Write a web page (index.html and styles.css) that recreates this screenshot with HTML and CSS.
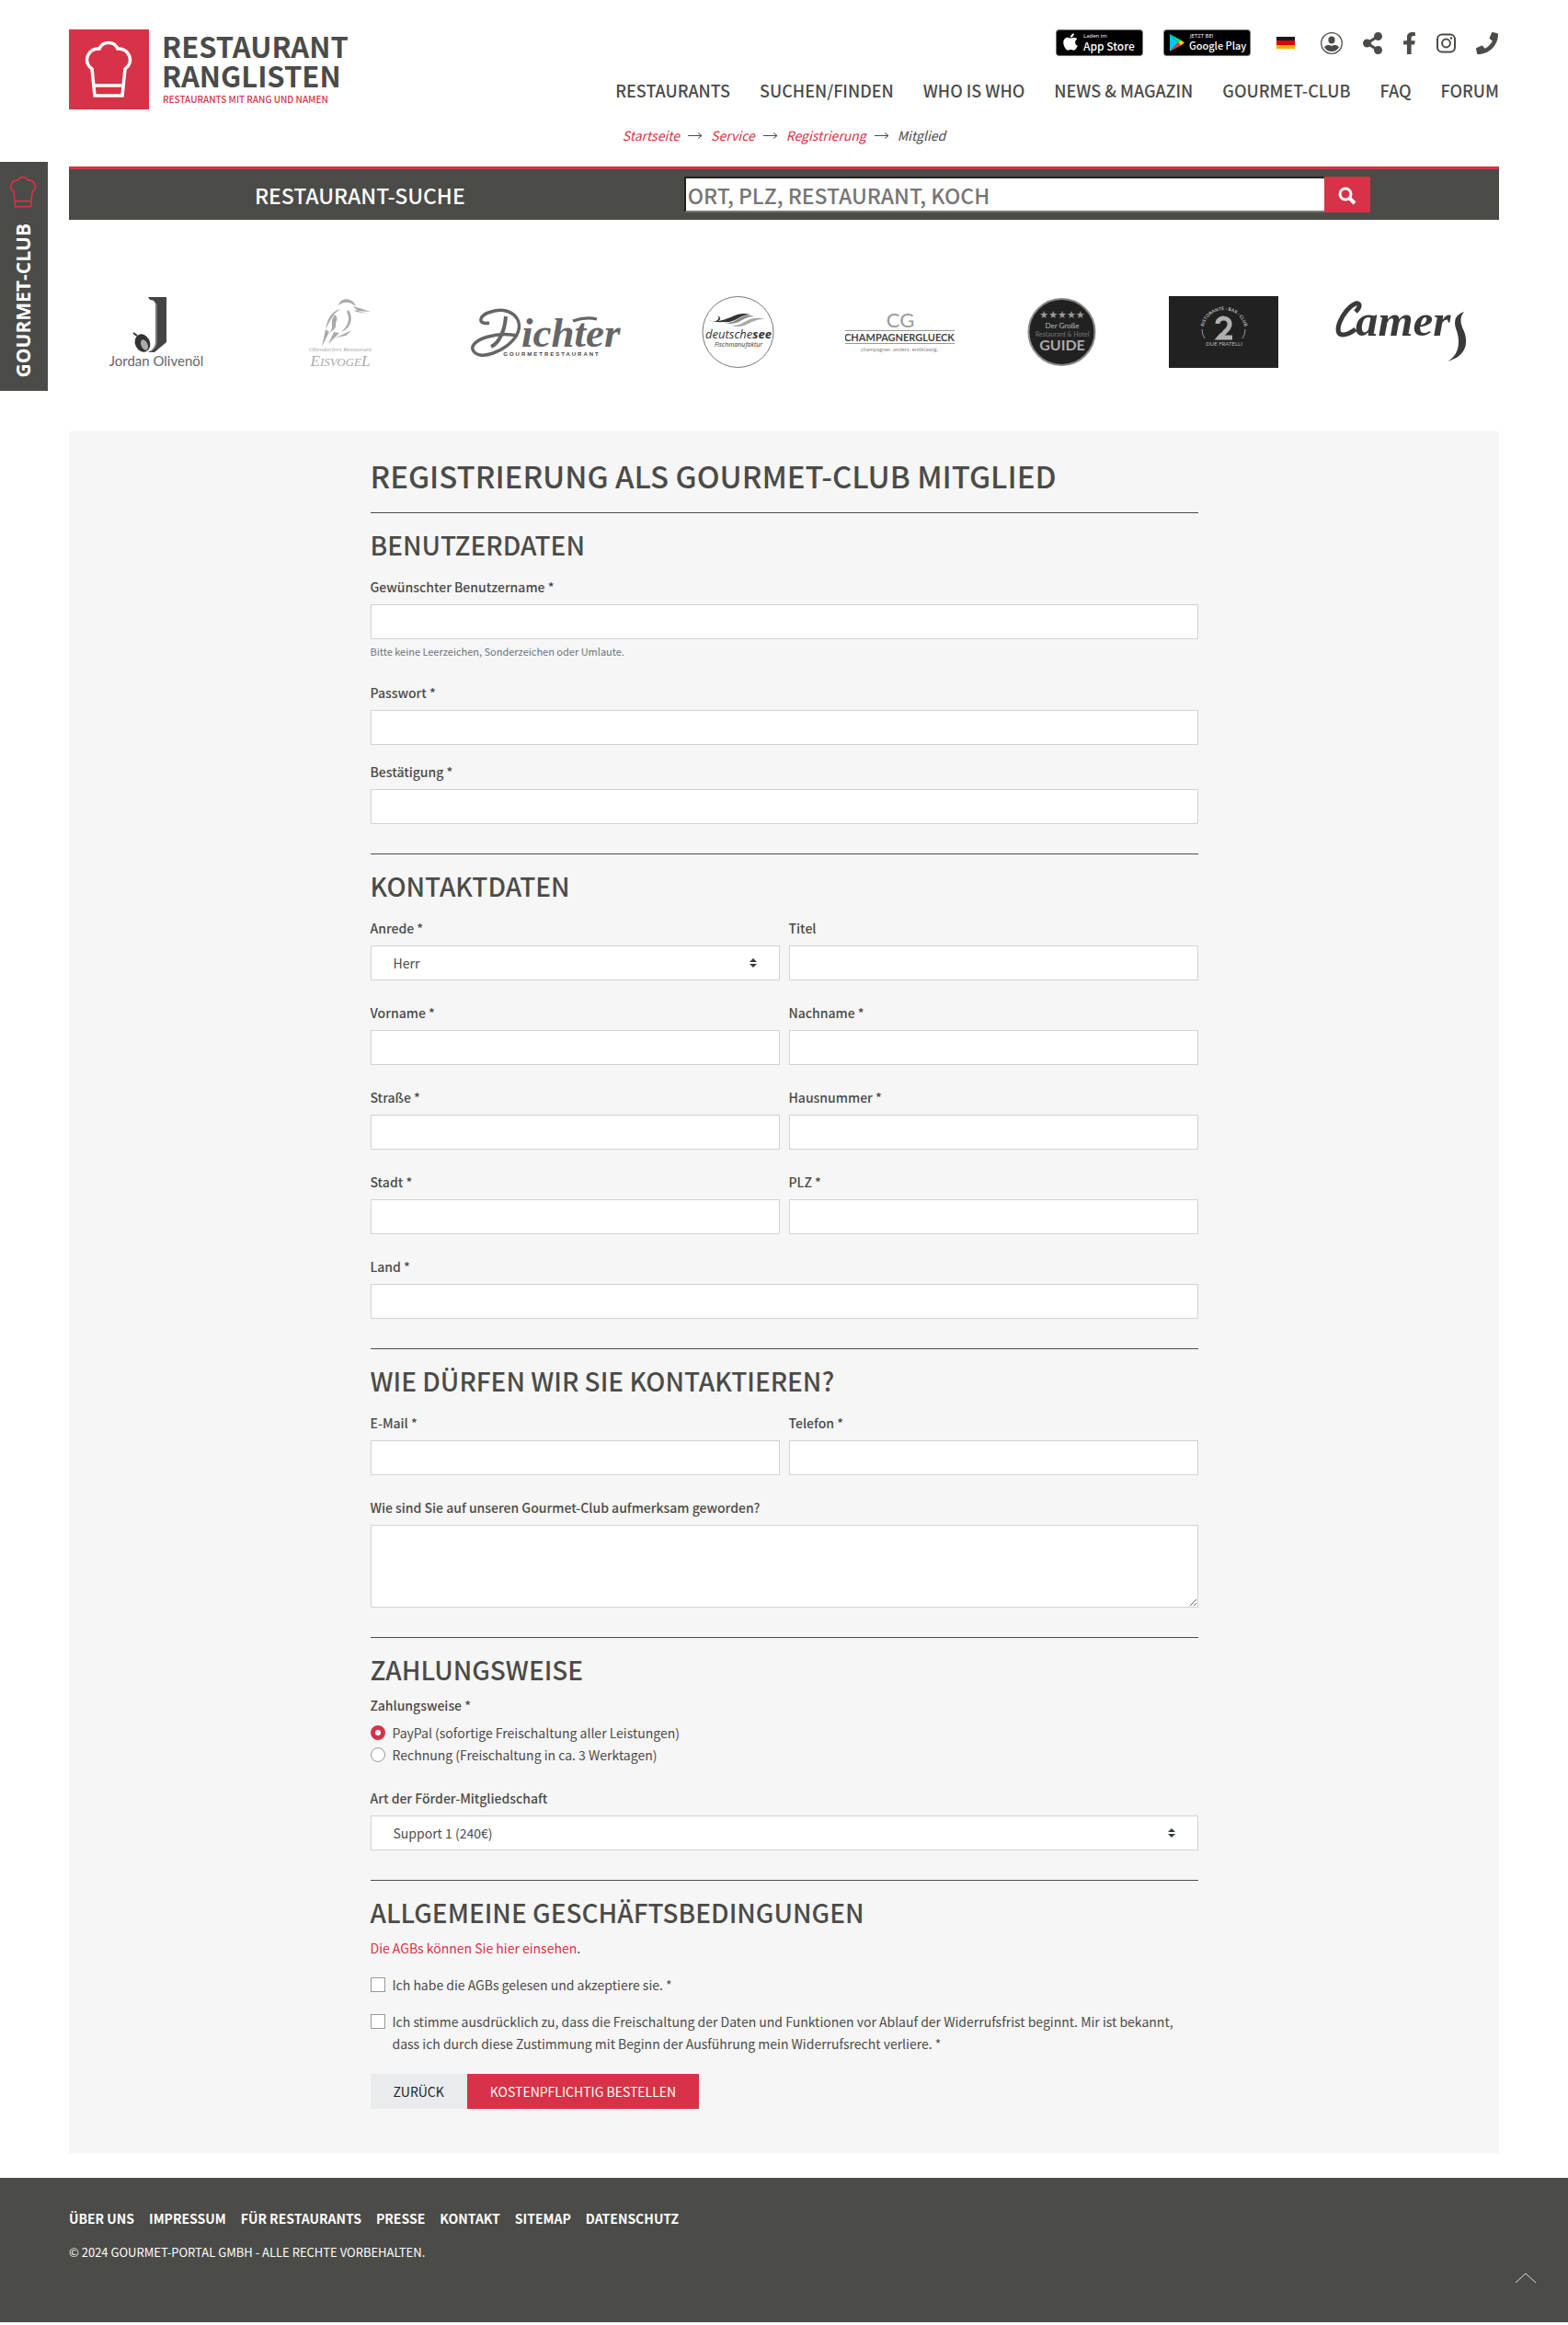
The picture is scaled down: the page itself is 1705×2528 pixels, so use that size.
FILE: index.html
```html
<!DOCTYPE html>
<html lang="de">
<head>
    <meta charset="UTF-8">
    <meta name="viewport" content="width=device-width, initial-scale=1.0">
    <title>Registrierung als Gourmet-Club Mitglied</title>
    <link rel="stylesheet" href="styles.css">
</head>
<body>
    <a class="club-tab" href="#">
        <svg class="club-hat" viewBox="13 10 60 66" aria-hidden="true">
            <path d="M28 72L25 43A12 12 0 0 1 33 21A11 11 0 0 1 53 21A12 12 0 0 1 61 43L58 72ZM27 61H59"/>
        </svg>
        <span>GOURMET-CLUB</span>
    </a>

    <div class="page">
        <header class="header">
            <a class="logo" href="#" aria-label="Restaurant Ranglisten">
                <svg width="320" height="87" viewBox="0 0 320 87">
                    <rect width="87" height="87" fill="#d73247"/>
                    <path d="M28 72L25 43A12 12 0 0 1 33 21A11 11 0 0 1 53 21A12 12 0 0 1 61 43L58 72ZM27 61H59" fill="none" stroke="#fff" stroke-width="3.5"/>
                    <text class="logo-name" x="101" y="31">RESTAURANT</text>
                    <text class="logo-name" x="101" y="63">RANGLISTEN</text>
                    <text class="logo-claim" x="102" y="80">RESTAURANTS MIT RANG UND NAMEN</text>
                </svg>
            </a>
            <div class="header-right">
                <div class="tools">
                    <a href="#" class="badge" aria-label="Laden im App Store">
                        <svg width="95" height="29" viewBox="0 0 95 29">
                            <rect x="0.5" y="0.5" width="94" height="28" rx="3" fill="#000" stroke="#777"/>
                            <svg x="8" y="3" width="16" height="21" viewBox="0 0 384 512"><path fill="#fff" d="M318.7 268.7c-.2-36.7 16.4-64.4 50-84.8-18.8-26.9-47.2-41.7-84.7-44.6-35.5-2.8-74.3 20.7-88.5 20.7-15 0-49.4-19.7-76.4-19.7C63.3 141.2 4 184.8 4 273.5q0 39.3 14.4 81.2c12.8 36.7 59 126.7 107.2 125.2 25.2-.6 43-17.9 75.8-17.9 31.8 0 48.3 17.9 76.4 17.9 48.6-.7 90.4-82.5 102.6-119.3-65.2-30.7-61.7-90-61.7-91.9zm-56.6-164.2c27.3-32.4 24.8-61.9 24-72.5-24.1 1.4-52 16.4-67.9 34.9-17.5 19.8-27.8 44.3-25.6 71.9 26.1 2 49.9-11.4 69.5-34.3z"/></svg>
                            <text class="badge-small" x="30" y="9">Laden im</text>
                            <text class="badge-apple" x="30" y="23">App Store</text>
                        </svg>
                    </a>
                    <a href="#" class="badge" aria-label="Jetzt bei Google Play">
                        <svg width="95" height="29" viewBox="0 0 95 29">
                            <rect x="0.5" y="0.5" width="94" height="28" rx="3" fill="#000" stroke="#777"/>
                            <path fill="#00c3ff" d="M7 5V24L16 14.5Z"/>
                            <path fill="#00e08a" d="M7 5L19 11.5L16 14.5Z"/>
                            <path fill="#ffce00" d="M19 11.5L23 14.5L19 17.5L16 14.5Z"/>
                            <path fill="#f0384b" d="M7 24L19 17.5L16 14.5Z"/>
                            <text class="badge-small" x="29" y="9">JETZT BEI</text>
                            <text class="badge-google" x="28" y="22">Google Play</text>
                        </svg>
                    </a>
                    <a href="#" class="flag" aria-label="Deutsch"></a>
                    <a href="#" aria-label="Anmelden">
                        <svg width="24" height="24" viewBox="0 0 24 24">
                            <circle cx="12" cy="12" r="11.3" fill="none" stroke="#4b4b48" stroke-width="1.3"/>
                            <ellipse cx="12" cy="8.5" rx="3.6" ry="4" fill="#4b4b48"/>
                            <path fill="#4b4b48" d="M4 16.5C5 14.5 7 14 9 14Q12 15.500 15 14C17 14 19 14.5 20 16.5C18 19.5 15 21 12 21S6 19.5 4 16.5Z"/>
                        </svg>
                    </a>
                    <a href="#" aria-label="Teilen">
                        <svg width="21" height="24" viewBox="0 0 448 512"><path fill="#4b4b48" d="M352 320c-22.608 0-43.387 7.819-59.79 20.895l-102.486-64.054a96.551 96.551 0 0 0 0-41.683l102.486-64.054C308.613 184.181 329.392 192 352 192c53.019 0 96-42.981 96-96S405.019 0 352 0s-96 42.981-96 96c0 7.158.79 14.13 2.276 20.841L155.79 180.895C139.387 167.819 118.608 160 96 160c-53.019 0-96 42.981-96 96s42.981 96 96 96c22.608 0 43.387-7.819 59.79-20.895l102.486 64.054A96.301 96.301 0 0 0 256 416c0 53.019 42.981 96 96 96s96-42.981 96-96-42.981-96-96-96z"/></svg>
                    </a>
                    <a href="#" aria-label="Facebook">
                        <svg width="15" height="24" viewBox="0 0 320 512"><path fill="#4b4b48" d="M279.14 288l14.22-92.66h-88.91v-60.13c0-25.35 12.42-50.06 52.24-50.06h40.42V6.26S260.43 0 225.36 0c-73.22 0-121.08 44.38-121.08 124.72v70.62H22.89V288h81.39v224h100.17V288z"/></svg>
                    </a>
                    <a href="#" aria-label="Instagram">
                        <svg width="21" height="24" viewBox="0 0 21 24">
                            <rect x="1" y="2.5" width="19" height="19" rx="5" fill="none" stroke="#4b4b48" stroke-width="2"/>
                            <circle cx="10.5" cy="12" r="4.4" fill="none" stroke="#4b4b48" stroke-width="2"/>
                            <circle cx="16" cy="6.5" r="1.3" fill="#4b4b48"/>
                        </svg>
                    </a>
                    <a href="#" aria-label="Telefon">
                        <svg width="24" height="24" viewBox="0 0 512 512"><path fill="#4b4b48" d="M493.4 24.6l-104-24c-11.3-2.6-22.9 3.3-27.5 13.9l-48 112c-4.2 9.8-1.4 21.3 6.9 28l60.6 49.6c-36 76.7-98.9 140.5-177.2 177.2l-49.6-60.6c-6.8-8.3-18.2-11.1-28-6.9l-112 48C3.9 366.5-2 378.1.6 389.4l24 104C27.1 504.2 36.7 512 48 512c256.1 0 464-207.5 464-464 0-11.2-7.7-20.9-18.6-23.4z"/></svg>
                    </a>
                </div>
                <nav class="main-nav">
                    <a href="#">Restaurants</a>
                    <a href="#">Suchen/Finden</a>
                    <a href="#">Who is Who</a>
                    <a href="#">News &amp; Magazin</a>
                    <a href="#">Gourmet-Club</a>
                    <a href="#">FAQ</a>
                    <a href="#">Forum</a>
                </nav>
            </div>
        </header>

        <nav class="breadcrumb">
            <a href="#">Startseite</a>
            <svg class="arrow" viewBox="0 0 16 10"><path d="M0 5.5H15M11 2.5L15 5.5L11 8.5"/></svg>
            <a href="#">Service</a>
            <svg class="arrow" viewBox="0 0 16 10"><path d="M0 5.5H15M11 2.5L15 5.5L11 8.5"/></svg>
            <a href="#">Registrierung</a>
            <svg class="arrow" viewBox="0 0 16 10"><path d="M0 5.5H15M11 2.5L15 5.5L11 8.5"/></svg>
            <span>Mitglied</span>
        </nav>

        <form class="search">
            <label class="search-title" for="search">Restaurant-Suche</label>
            <div class="search-box">
                <input type="text" id="search" placeholder="ORT, PLZ, RESTAURANT, KOCH">
                <button type="submit" aria-label="Suchen">
                    <svg width="20" height="20" viewBox="0 0 20 20"><circle cx="8" cy="8" r="6" fill="none" stroke="#fff" stroke-width="3"/><path d="M12 12L18 18" stroke="#fff" stroke-width="4"/></svg>
                </button>
            </div>
        </form>

        <section class="partners">
            <svg width="133" height="78" viewBox="0 0 133 78">
                <path fill="#444" d="M58 1H78V50L65 61H58Q66 57 66 50V8Q65 4 60 4Z"/>
                <path d="M67 8V51Q66 57 61 60" fill="none" stroke="#aaa"/>
                <ellipse cx="52" cy="51" rx="8" ry="10" transform="rotate(-25 52 51)" fill="#333"/>
                <ellipse cx="54" cy="53" rx="3.5" ry="6" transform="rotate(-25 54 53)" fill="#aaa"/>
                <path d="M46 43L42 40" stroke="#333" stroke-width="2"/>
                <text class="p-jordan" x="67" y="76">Jordan Olivenöl</text>
            </svg>
            <svg width="151" height="78" viewBox="0 0 151 78">
                <path fill="#aaa" d="M75 10C78 0 91 2 94 11Q84 3 75 10ZM91 11Q99 13 110 17L96 16ZM92 15L107 19L94 17Z"/>
                <path fill="#aaa" d="M86 15C92 25 88 35 78 39C86 32 88 24 84 17ZM78 14C66 16 63 26 61 36C66 27 69 18 78 14ZM71 20C76 25 72 26 72 31C73 36 67 38 65 40C72 32 64 30 71 20ZM61 36L57 55L65 39ZM70 39L64 52L76 40ZM72 45L90 37L83 43Z"/>
                <text class="p-eis-small" x="77" y="60">Obendorfers Restaurant</text>
                <text class="p-eis" x="77" y="76">E<tspan class="p-eis-caps">ISVOGE</tspan>L</text>
            </svg>
            <svg width="185" height="78" viewBox="0 0 185 78">
                <path d="M31 29C19 32 18 21 33 17C52 10 70 24 61 42C51 60 18 72 13 58C10 47 40 38 62 43" fill="none" stroke="#666" stroke-width="3.5"/>
                <path d="M49 22C48 37 42 51 33 55" fill="none" stroke="#666" stroke-width="4"/>
                <text class="p-dichter" x="66" y="55">ichter</text>
                <path d="M122 27Q136 22 148 25" fill="none" stroke="#666" stroke-width="3"/>
                <text class="p-dichter-small" x="99" y="65">GOURMETRESTAURANT</text>
            </svg>
            <svg width="119" height="78" viewBox="0 0 119 78">
                <circle cx="59.5" cy="39" r="38.5" fill="#fff" stroke="#777"/>
                <path fill="#333" d="M27 26Q34 29 37 26Q40 24 37 21Q43 24 38 27C51 26 58 16 73 20C61 20 56 30 43 28Q34 29 27 26Z"/>
                <path fill="#888" d="M46 29C59 30 64 17 77 22C64 22 60 33 46 29Z"/>
                <path fill="#aaa" d="M53 32C67 33 69 20 89 25C74 24 67 37 53 32Z"/>
                <text class="p-see" x="60" y="46">deutsche<tspan class="p-see-bold">see</tspan></text>
                <text class="p-see-small" x="60" y="55">Fischmanufaktur</text>
            </svg>
            <svg width="119" height="78" viewBox="0 0 119 78">
                <text class="p-cg" x="60" y="34">CG</text>
                <path d="M0 37.5H119M0 51.5H119" stroke="#999"/>
                <text class="p-glueck" x="59" y="49">CHAMPAGNERGLUECK</text>
                <text class="p-glueck-small" x="59" y="60">champagner. anders. erstklassig.</text>
            </svg>
            <svg width="119" height="78" viewBox="0 0 119 78">
                <circle cx="59.5" cy="39" r="36" fill="#212121" stroke="#888" stroke-width="2"/>
                <text class="p-stars" x="60" y="24">★★★★★</text>
                <text class="p-guide-top" x="60" y="35">Der Große</text>
                <text class="p-guide-mid" x="60" y="44">Restaurant &amp; Hotel</text>
                <text class="p-guide" x="60" y="59">GUIDE</text>
            </svg>
            <svg width="119" height="78" viewBox="0 0 119 78">
                <rect width="119" height="78" fill="#212121"/>
                <path id="arc" d="M38 33A22.5 22.5 0 0 1 82 33" fill="none"/>
                <text class="p-arc"><textPath href="#arc" startOffset="50%">RISTORANTE · BAR · CLUB</textPath></text>
                <path d="M36 36Q36 42 39 46M83 36Q83 42 80 46" fill="none" stroke="#999"/>
                <path d="M53 30C53 22 67 22 66 31C66 36 61 38 55 45H69" fill="none" stroke="#b0b0b0" stroke-width="5"/>
                <path d="M61 30L57 40" stroke="#212121"/>
                <text class="p-due" x="60" y="54">DUE FRATELLI</text>
            </svg>
            <svg width="155" height="78" viewBox="0 0 155 78">
                <path d="M27 17C33 11 32 7 27 8C13 14 1 42 13 42C19 42 23 39 27 36" fill="none" stroke="#3a3a3a" stroke-width="5"/>
                <text class="p-camers" x="27" y="43">amer</text>
                <path fill="#3a3a3a" d="M145 17Q132 21 136 35C143 53 137 66 127 71C152 64 149 45 143 34Q139 24 145 17Z"/>
            </svg>
        </section>

        <main class="panel">
            <form class="form">
                <h1>Registrierung als Gourmet-Club Mitglied</h1>
                <hr>
                <h2>Benutzerdaten</h2>
                <div class="group">
                    <label for="username">Gewünschter Benutzername *</label>
                    <input type="text" id="username">
                    <small>Bitte keine Leerzeichen, Sonderzeichen oder Umlaute.</small>
                </div>
                <div class="group group-tight">
                    <label for="password">Passwort *</label>
                    <input type="password" id="password">
                </div>
                <div class="group">
                    <label for="confirm">Bestätigung *</label>
                    <input type="password" id="confirm">
                </div>
                <hr>
                <h2>Kontaktdaten</h2>
                <div class="row">
                    <div class="group">
                        <label for="anrede">Anrede *</label>
                        <select id="anrede">
                            <option>Herr</option>
                            <option>Frau</option>
                        </select>
                    </div>
                    <div class="group">
                        <label for="titel">Titel</label>
                        <input type="text" id="titel">
                    </div>
                    <div class="group">
                        <label for="vorname">Vorname *</label>
                        <input type="text" id="vorname">
                    </div>
                    <div class="group">
                        <label for="nachname">Nachname *</label>
                        <input type="text" id="nachname">
                    </div>
                    <div class="group">
                        <label for="strasse">Straße *</label>
                        <input type="text" id="strasse">
                    </div>
                    <div class="group">
                        <label for="hausnummer">Hausnummer *</label>
                        <input type="text" id="hausnummer">
                    </div>
                    <div class="group">
                        <label for="stadt">Stadt *</label>
                        <input type="text" id="stadt">
                    </div>
                    <div class="group">
                        <label for="plz">PLZ *</label>
                        <input type="text" id="plz">
                    </div>
                </div>
                <div class="group">
                    <label for="land">Land *</label>
                    <input type="text" id="land">
                </div>
                <hr>
                <h2>Wie dürfen wir Sie kontaktieren?</h2>
                <div class="row">
                    <div class="group">
                        <label for="email">E-Mail *</label>
                        <input type="email" id="email">
                    </div>
                    <div class="group">
                        <label for="telefon">Telefon *</label>
                        <input type="tel" id="telefon">
                    </div>
                </div>
                <div class="group">
                    <label for="info">Wie sind Sie auf unseren Gourmet-Club aufmerksam geworden?</label>
                    <textarea id="info"></textarea>
                </div>
                <hr>
                <h2>Zahlungsweise</h2>
                <fieldset class="payment">
                    <legend>Zahlungsweise *</legend>
                    <div class="check">
                        <input type="radio" name="payment" id="paypal" checked>
                        <label for="paypal">PayPal (sofortige Freischaltung aller Leistungen)</label>
                    </div>
                    <div class="check">
                        <input type="radio" name="payment" id="rechnung">
                        <label for="rechnung">Rechnung (Freischaltung in ca. 3 Werktagen)</label>
                    </div>
                </fieldset>
                <div class="group">
                    <label for="support">Art der Förder-Mitgliedschaft</label>
                    <select id="support">
                        <option>Support 1 (240€)</option>
                    </select>
                </div>
                <hr>
                <h2>Allgemeine Geschäftsbedingungen</h2>
                <p><a href="#">Die AGBs können Sie hier einsehen</a>.</p>
                <div class="check check-terms">
                    <input type="checkbox" id="agb">
                    <label for="agb">Ich habe die AGBs gelesen und akzeptiere sie. *</label>
                </div>
                <div class="check check-terms">
                    <input type="checkbox" id="widerruf">
                    <label for="widerruf">Ich stimme ausdrücklich zu, dass die Freischaltung der Daten und Funktionen vor Ablauf der Widerrufsfrist beginnt. Mir ist bekannt, dass ich durch diese Zustimmung mit Beginn der Ausführung mein Widerrufsrecht verliere. *</label>
                </div>
                <div class="buttons">
                    <button type="button" class="btn btn-light">Zurück</button>
                    <button type="submit" class="btn btn-primary">Kostenpflichtig bestellen</button>
                </div>
            </form>
        </main>
    </div>

    <footer class="footer">
        <div>
            <nav class="footer-nav">
                <a href="#">Über uns</a>
                <a href="#">Impressum</a>
                <a href="#">Für Restaurants</a>
                <a href="#">Presse</a>
                <a href="#">Kontakt</a>
                <a href="#">Sitemap</a>
                <a href="#">Datenschutz</a>
            </nav>
            <p class="copyright">© 2024 Gourmet-Portal GmbH - Alle Rechte vorbehalten.</p>
        </div>
        <a class="to-top" href="#" aria-label="Nach oben">
            <svg width="22" height="12" viewBox="0 0 22 12"><path d="M0 11L11 1L22 11" fill="none" stroke="#ddd"/></svg>
        </a>
    </footer>
</body>
</html>
```

FILE: styles.css
```css
* {
    box-sizing: border-box;
}

body {
    margin: 0;
    font-family: "Noto Sans CJK SC", "Noto Sans", sans-serif;
    font-size: 14px;
    line-height: 24px;
    color: #4b4b48;
    background: #fff;
}

a {
    color: #d73247;
    text-decoration: none;
}

svg {
    display: block;
    flex: none;
}

input,
select,
textarea,
button {
    font: inherit;
    color: inherit;
    margin: 0;
    border-radius: 0;
}

.page {
    padding: 0 75px;
}

/* Gourmet-Club Reiter am linken Rand */
.club-tab {
    position: absolute;
    left: 0;
    top: 176px;
    width: 52px;
    height: 249px;
    padding: 14px 2px 0 0;
    background: #4b4b48;
    color: #fff;
    display: flex;
    flex-direction: column;
    align-items: center;
    gap: 16px;
}

.club-hat {
    width: 34px;
    height: 37px;
    fill: none;
    stroke: #d73247;
    stroke-width: 3;
}

.club-tab span {
    writing-mode: vertical-rl;
    transform: rotate(180deg);
    font-family: "Open Sans", sans-serif;
    font-size: 21px;
    font-weight: 700;
}

/* Kopfbereich */
.header {
    display: flex;
    justify-content: space-between;
    padding-top: 32px;
}

.logo-name {
    font-size: 31px;
    font-weight: 700;
    fill: #4b4b48;
}

.logo-claim {
    font-size: 10px;
    font-weight: 500;
    fill: #d73247;
}

.header-right {
    display: flex;
    flex-direction: column;
    align-items: flex-end;
    gap: 25px;
}

.tools {
    display: flex;
    align-items: center;
    gap: 22px;
    height: 29px;
    padding-right: 1px;
}

.badge:nth-child(2) {
    margin-right: 6px;
}

.badge-small {
    font-family: "Open Sans", sans-serif;
    font-size: 6px;
    fill: #fff;
}

.badge-apple,
.badge-google {
    font-size: 12px;
    font-weight: 500;
    fill: #fff;
}

.badge-google {
    font-size: 11px;
}

.flag {
    width: 20px;
    height: 13px;
    margin-right: 6px;
    background: linear-gradient(#181820 33%, #d00 33%, #d00 67%, #f5ae00 67%);
}

.main-nav {
    display: flex;
    gap: 32px;
}

.main-nav a {
    font-size: 18px;
    font-weight: 500;
    text-transform: uppercase;
    color: #4b4b48;
}

.breadcrumb {
    display: flex;
    justify-content: center;
    align-items: center;
    gap: 9px;
    padding: 16px 0 22px;
    font-style: italic;
}

.arrow {
    width: 16px;
    height: 10px;
    fill: none;
    stroke: #4b4b48;
}

/* Suche */
.search {
    display: grid;
    grid-template-columns: 43% 48%;
    align-items: center;
    padding: 8px 0;
    border-top: 3px solid #d73247;
    background: #4b4b48;
}

.search-title {
    padding-right: 36px;
    text-align: center;
    text-transform: uppercase;
    font-size: 23px;
    font-weight: 500;
    color: #fff;
}

.search-box {
    display: flex;
    height: 39px;
}

.search-box input {
    flex: 1;
    min-width: 0;
    padding: 0 2px;
    border: 2px inset #767676;
    border-right: 0;
    font-size: 23px;
    font-weight: 500;
    line-height: 34px;
    background: #fff;
}

.search-box input::placeholder {
    color: #767676;
    opacity: 1;
}

.search-box button {
    width: 50px;
    border: 0;
    padding: 2px 0 0;
    background: #d73247;
    display: flex;
    align-items: center;
    justify-content: center;
}

/* Partner */
.partners {
    display: flex;
    justify-content: space-around;
    padding: 83px 0 69px;
}

.partners text {
    text-anchor: middle;
}

.p-jordan {
    font-family: "Lato", sans-serif;
    font-size: 15px;
    fill: #666;
}

.p-eis-small {
    font: italic 7px "Liberation Serif", serif;
    fill: #aaa;
}

.p-eis {
    font: italic 17px "Liberation Serif", serif;
    fill: #aaa;
}

.p-eis-caps {
    font-size: 13px;
}

.partners .p-dichter {
    font: italic 700 45px "Liberation Serif", serif;
    text-anchor: start;
    fill: #666;
}

.p-dichter-small {
    font: 700 6px "Liberation Sans", sans-serif;
    letter-spacing: 2px;
    fill: #444;
}

.p-see {
    font: italic 13px "Open Sans", sans-serif;
    fill: #333;
}

.p-see-bold {
    font-weight: 700;
}

.p-see-small {
    font: italic 7px "Open Sans", sans-serif;
    fill: #333;
}

.p-cg {
    font: 22px "Lato", sans-serif;
    fill: #999;
}

.p-glueck {
    font: 700 11px "Lato", sans-serif;
    fill: #444;
}

.p-glueck-small {
    font: 6px "Lato", sans-serif;
    fill: #888;
}

.p-stars {
    font: 11px "DejaVu Sans", sans-serif;
    fill: #999;
}

.p-guide-top {
    font: 8px "Lato", sans-serif;
    fill: #bbb;
}

.p-guide-mid {
    font: 7px "Lato", sans-serif;
    fill: #777;
}

.p-guide {
    font: 700 16px "Lato", sans-serif;
    fill: #aaa;
}

.p-arc {
    font: 700 5px "Lato", sans-serif;
    fill: #bbb;
}

.p-due {
    font: 6px "Lato", sans-serif;
    fill: #bbb;
}

.partners .p-camers {
    font: italic 700 49px "Liberation Serif", serif;
    text-anchor: start;
    fill: #3a3a3a;
}

/* Formular */
.panel {
    padding: 27px 16px 48px;
    background: #f6f6f6;
}

.form {
    max-width: 900px;
    margin: 0 auto;
}

h1,
h2 {
    margin: 0;
    font-weight: 500;
    text-transform: uppercase;
}

h1 {
    padding-bottom: 2px;
    font-size: 33px;
    line-height: 43px;
}

h2 {
    margin-bottom: 9px;
    font-size: 28px;
    line-height: 36px;
}

hr {
    margin: 16px 0;
    border: 0;
    border-top: 1px solid #4b4b48;
}

.group {
    display: flex;
    flex-direction: column;
    padding-bottom: 16px;
}

.group-tight {
    padding-bottom: 10px;
}

.group label {
    padding: 7px 0;
    font-weight: 500;
}

.group input,
.group select {
    width: 100%;
    height: 38px;
    padding: 0 24px;
    border: 1px solid #ced4da;
    background: #fff;
}

.group select {
    appearance: none;
    background: #fff url("data:image/svg+xml,%3csvg xmlns='http://www.w3.org/2000/svg' viewBox='0 0 4 5'%3e%3cpath fill='%23343a40' d='M2 0L0 2h4zm0 5L0 3h4z'/%3e%3c/svg%3e") no-repeat right 24px center / 8px 10px;
}

.group textarea {
    width: 100%;
    height: 90px;
    padding: 6px 24px;
    border: 1px solid #ced4da;
    background: #fff;
    resize: vertical;
}

.group small {
    margin-top: 4px;
    font-size: 11px;
    line-height: 19px;
    color: #6c757d;
}

.row {
    display: grid;
    grid-template-columns: 1fr 1fr;
    column-gap: 10px;
}

.payment {
    margin: 0;
    padding: 0 0 16px;
    border: 0;
}

.payment legend {
    padding: 0 0 6px;
    font-weight: 500;
}

.check {
    display: flex;
    align-items: flex-start;
    gap: 8px;
}

.check input {
    appearance: none;
    flex: none;
    width: 16px;
    height: 16px;
    margin-top: 4px;
    border: 1px solid #999;
    background: #fff;
}

.check input[type="radio"] {
    border-radius: 50%;
}

.check input[type="radio"]:checked {
    border: 5px solid #d73247;
}

.check-terms {
    margin-bottom: 16px;
}

p {
    margin: 0 0 16px;
}

.buttons {
    display: flex;
    padding-top: 5px;
}

.btn {
    height: 38px;
    padding: 0 25px;
    border: 0;
    text-transform: uppercase;
}

.btn-light {
    background: #e9ebed;
    color: #212529;
}

.btn-primary {
    background: #d73247;
    color: #fff;
}

/* Footer */
.footer {
    display: flex;
    justify-content: space-between;
    align-items: flex-end;
    margin: 27px 0 3px;
    padding: 32px 35px 42px 75px;
    background: #4b4b48;
    color: #fff;
    text-transform: uppercase;
}

.footer-nav {
    display: flex;
    flex-wrap: wrap;
    gap: 16px;
    font-weight: 700;
}

.footer-nav a {
    color: #fff;
}

.copyright {
    margin: 13px 0 22px;
    font-size: 13px;
}
```
